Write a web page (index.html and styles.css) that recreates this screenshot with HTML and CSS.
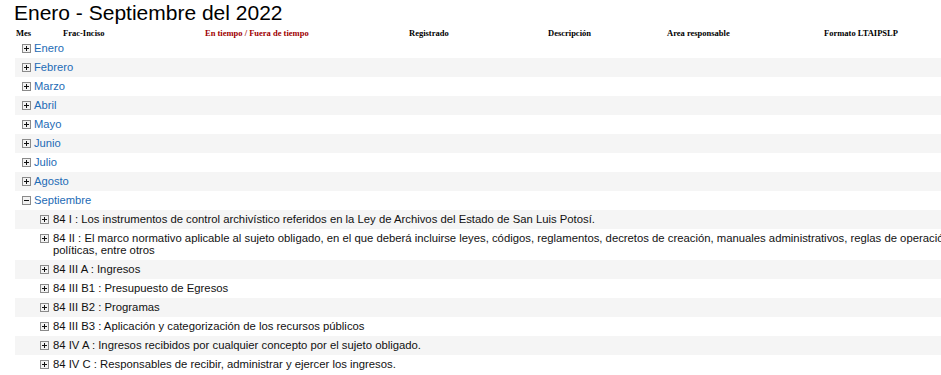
FILE: index.html
```html
<!DOCTYPE html>
<html lang="es">
<head>
<meta charset="utf-8">
<title>Enero - Septiembre del 2022</title>
<link rel="stylesheet" href="styles.css">
</head>
<body>
<div class="page">
  <h1 class="title">Enero - Septiembre del 2022</h1>
  <div class="head">
    <span>Mes</span>
    <span>Frac-Inciso</span>
    <span class="red">En tiempo / Fuera de tiempo</span>
    <span>Registrado</span>
    <span>Descripción</span>
    <span>Area responsable</span>
    <span>Formato LTAIPSLP</span>
  </div>
  <ul class="tree">
    <li class="row month"><svg class="ico" viewBox="0 0 9 9"><rect x="0.5" y="0.5" width="8" height="8"/><path d="M2 4.5h5M4.5 2v5"/></svg><a>Enero</a></li>
    <li class="row month alt"><svg class="ico" viewBox="0 0 9 9"><rect x="0.5" y="0.5" width="8" height="8"/><path d="M2 4.5h5M4.5 2v5"/></svg><a>Febrero</a></li>
    <li class="row month"><svg class="ico" viewBox="0 0 9 9"><rect x="0.5" y="0.5" width="8" height="8"/><path d="M2 4.5h5M4.5 2v5"/></svg><a>Marzo</a></li>
    <li class="row month alt"><svg class="ico" viewBox="0 0 9 9"><rect x="0.5" y="0.5" width="8" height="8"/><path d="M2 4.5h5M4.5 2v5"/></svg><a>Abril</a></li>
    <li class="row month"><svg class="ico" viewBox="0 0 9 9"><rect x="0.5" y="0.5" width="8" height="8"/><path d="M2 4.5h5M4.5 2v5"/></svg><a>Mayo</a></li>
    <li class="row month alt"><svg class="ico" viewBox="0 0 9 9"><rect x="0.5" y="0.5" width="8" height="8"/><path d="M2 4.5h5M4.5 2v5"/></svg><a>Junio</a></li>
    <li class="row month"><svg class="ico" viewBox="0 0 9 9"><rect x="0.5" y="0.5" width="8" height="8"/><path d="M2 4.5h5M4.5 2v5"/></svg><a>Julio</a></li>
    <li class="row month alt"><svg class="ico" viewBox="0 0 9 9"><rect x="0.5" y="0.5" width="8" height="8"/><path d="M2 4.5h5M4.5 2v5"/></svg><a>Agosto</a></li>
    <li class="row month"><svg class="ico" viewBox="0 0 9 9"><rect x="0.5" y="0.5" width="8" height="8"/><path d="M2 4.5h5"/></svg><a>Septiembre</a></li>
    <li class="row sub alt"><svg class="ico" viewBox="0 0 9 9"><rect x="0.5" y="0.5" width="8" height="8"/><path d="M2 4.5h5M4.5 2v5"/></svg><span class="txt">84 I : Los instrumentos de control archivístico referidos en la Ley de Archivos del Estado de San Luis Potosí.</span></li>
    <li class="row sub"><svg class="ico" viewBox="0 0 9 9"><rect x="0.5" y="0.5" width="8" height="8"/><path d="M2 4.5h5M4.5 2v5"/></svg><span class="txt">84 II : El marco normativo aplicable al sujeto obligado, en el que deberá incluirse leyes, códigos, reglamentos, decretos de creación, manuales administrativos, reglas de operación, políticas, entre otros</span></li>
    <li class="row sub alt"><svg class="ico" viewBox="0 0 9 9"><rect x="0.5" y="0.5" width="8" height="8"/><path d="M2 4.5h5M4.5 2v5"/></svg><span class="txt">84 III A : Ingresos</span></li>
    <li class="row sub"><svg class="ico" viewBox="0 0 9 9"><rect x="0.5" y="0.5" width="8" height="8"/><path d="M2 4.5h5M4.5 2v5"/></svg><span class="txt">84 III B1 : Presupuesto de Egresos</span></li>
    <li class="row sub alt"><svg class="ico" viewBox="0 0 9 9"><rect x="0.5" y="0.5" width="8" height="8"/><path d="M2 4.5h5M4.5 2v5"/></svg><span class="txt">84 III B2 : Programas</span></li>
    <li class="row sub"><svg class="ico" viewBox="0 0 9 9"><rect x="0.5" y="0.5" width="8" height="8"/><path d="M2 4.5h5M4.5 2v5"/></svg><span class="txt">84 III B3 : Aplicación y categorización de los recursos públicos</span></li>
    <li class="row sub alt"><svg class="ico" viewBox="0 0 9 9"><rect x="0.5" y="0.5" width="8" height="8"/><path d="M2 4.5h5M4.5 2v5"/></svg><span class="txt">84 IV A : Ingresos recibidos por cualquier concepto por el sujeto obligado.</span></li>
    <li class="row sub"><svg class="ico" viewBox="0 0 9 9"><rect x="0.5" y="0.5" width="8" height="8"/><path d="M2 4.5h5M4.5 2v5"/></svg><span class="txt">84 IV C : Responsables de recibir, administrar y ejercer los ingresos.</span></li>
  </ul>
</div>
</body>
</html>
```

FILE: styles.css
```css
html, body {
  margin: 0;
  padding: 0;
  background: #fff;
  overflow: hidden;
}
body {
  font-family: "Liberation Sans", Arial, sans-serif;
  color: #111;
}
.page {
  width: 1010px;
}
.title {
  margin: 1px 0 0 14px;
  font-size: 21px;
  font-weight: normal;
  line-height: 24px;
  color: #000;
}
.head {
  display: grid;
  grid-template-columns: 47px 142px 204px 139px 119px 157px auto;
  padding-left: 16px;
  margin-top: 3px;
  font-family: "Liberation Serif", "Times New Roman", serif;
  font-weight: bold;
  font-size: 8.5px;
  line-height: 11px;
  color: #000;
}
.head .red {
  color: #a00000;
}
.tree {
  list-style: none;
  margin: 0 0 0 15px;
  padding: 0;
}
.row {
  display: flex;
  align-items: flex-start;
  padding: 3px 0 4px;
  font-size: 11.3px;
  line-height: 12px;
}
.row.alt {
  background: #f5f5f5;
}
.ico {
  flex: none;
  width: 9px;
  height: 9px;
  margin-top: 2px;
}
.ico rect {
  fill: #f2f2f2;
  stroke: #8a8a8a;
  stroke-width: 1;
}
.ico path {
  stroke: #111;
  stroke-width: 1;
  fill: none;
}
.month {
  padding-left: 7px;
}
.month .ico {
  margin-right: 3px;
}
.month a {
  color: #1d6bb5;
  font-size: 11.2px;
}
.sub {
  padding-left: 25px;
}
.sub .ico {
  margin-right: 4px;
}
.sub .txt {
  width: 925px;
  color: #111;
}
```
